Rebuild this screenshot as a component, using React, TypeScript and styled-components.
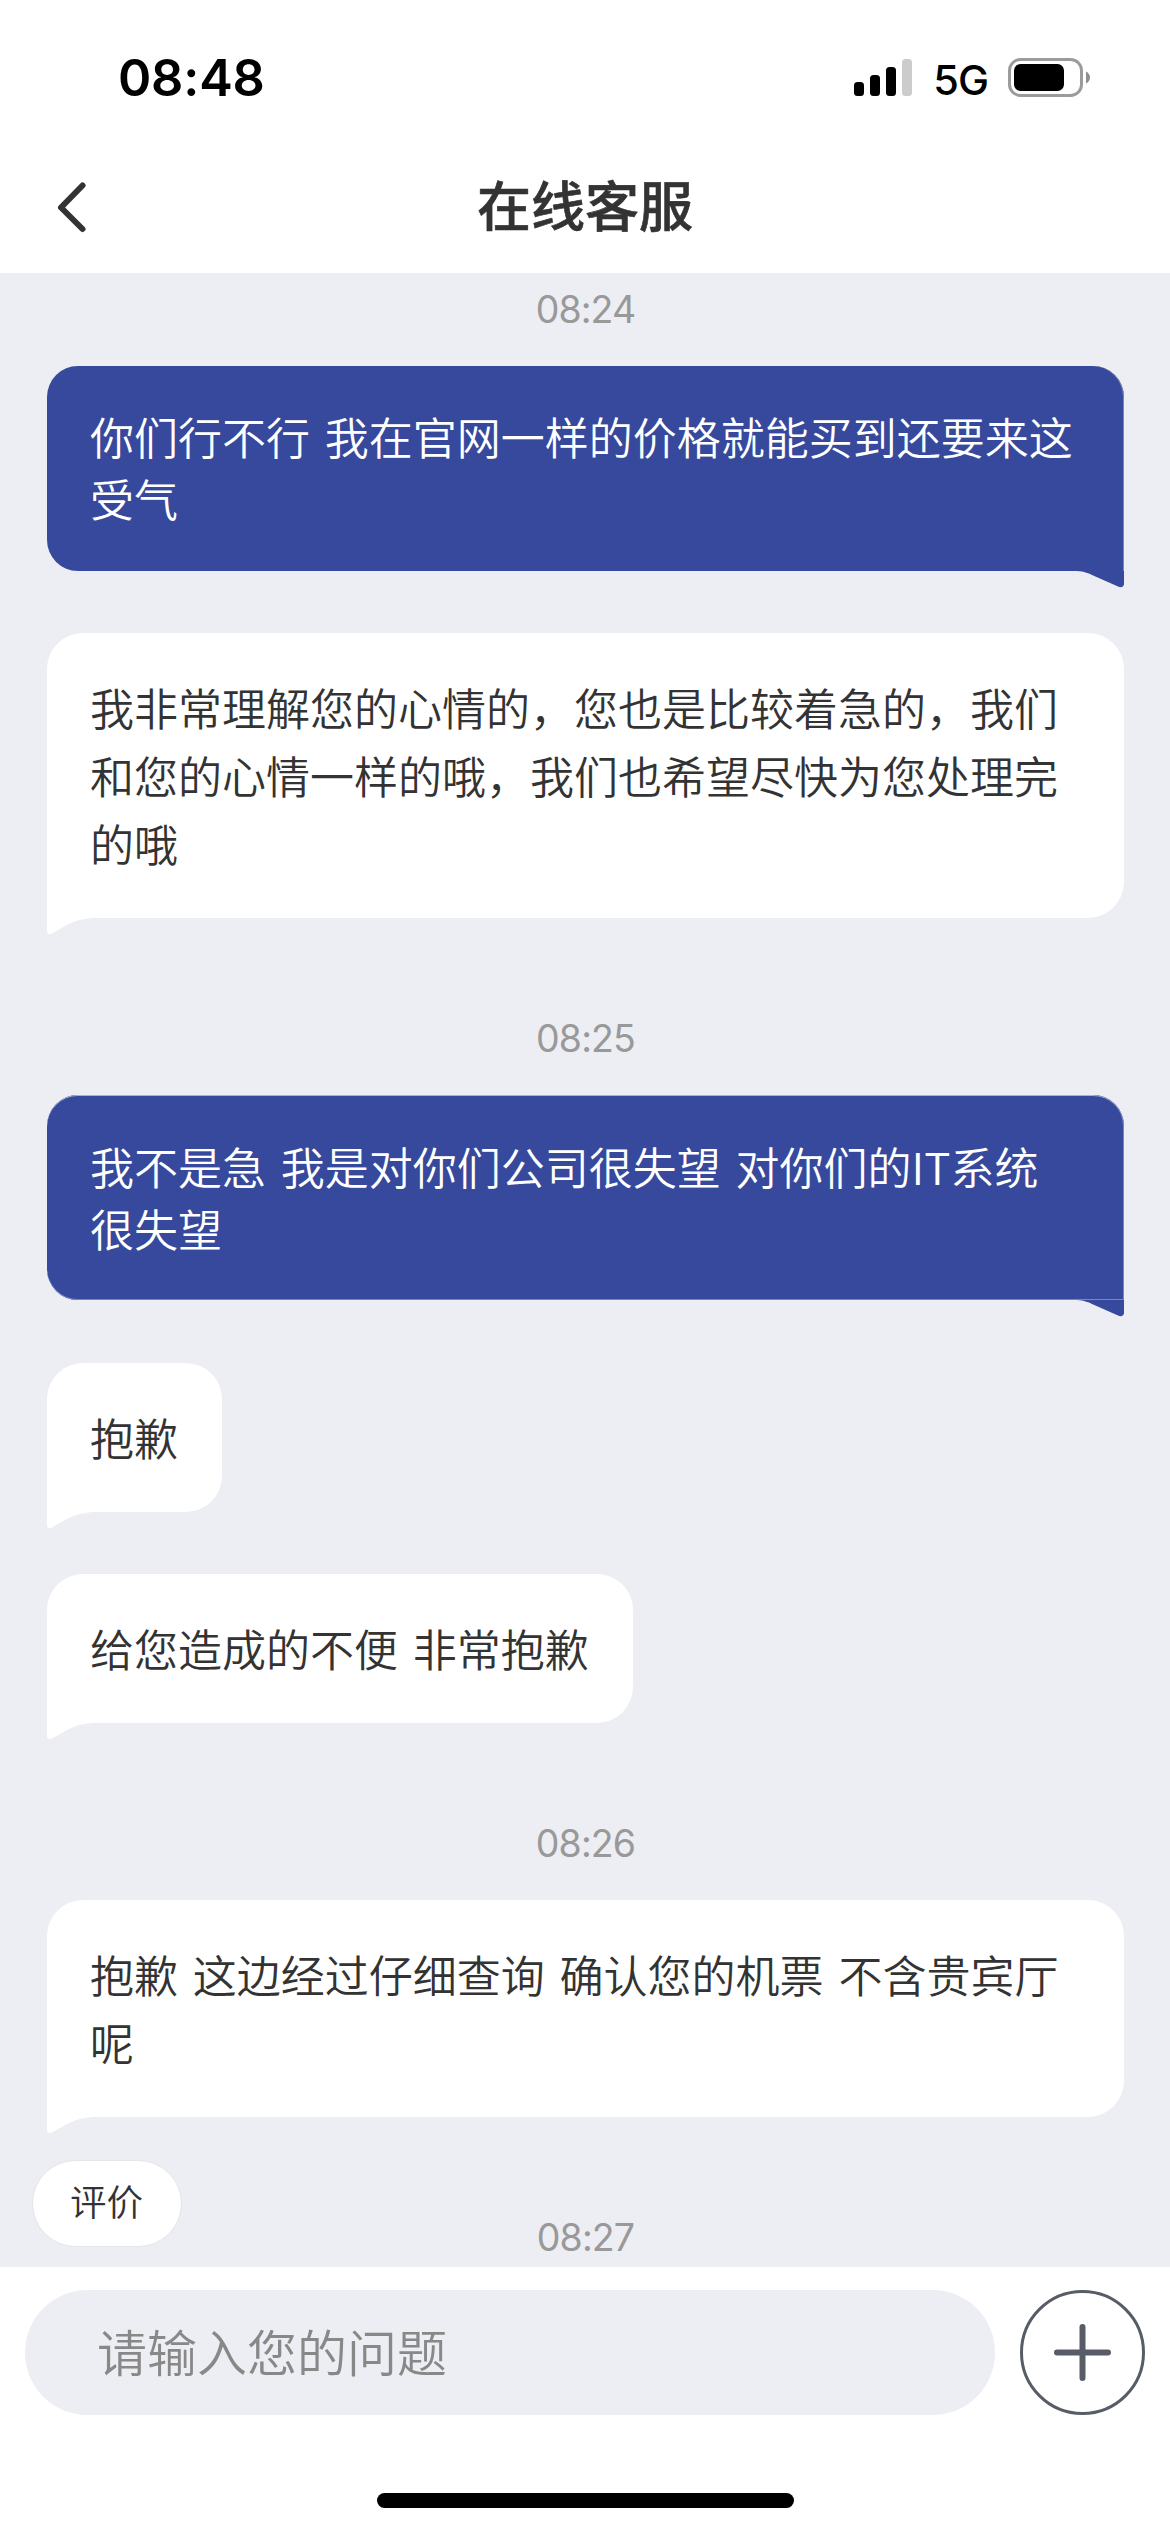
import React from 'react';
import styled, { createGlobalStyle, css } from 'styled-components';

const GlobalStyle = createGlobalStyle`
  * { box-sizing: border-box; }
  body { margin: 0; background: #fff; }
  button { font: inherit; color: inherit; cursor: pointer; }
`;

const surface = '#edeef3';
const blue = '#37499c';
const latin = `Inter, "Liberation Sans", sans-serif`;
const cjk = `"Noto Sans CJK SC", "Liberation Sans", sans-serif`;

const Screen = styled.div`
  width: 1170px;
  height: 2532px;
  display: flex;
  flex-direction: column;
  background: #fff;
  color: #333;
  font-family: ${cjk};
  overflow: hidden;
`;

const StatusBar = styled.header`
  height: 141px;
  flex: none;
  display: flex;
  align-items: center;
  justify-content: space-between;
  padding: 14px 79px 0 118px;
  color: #000;
  font-family: ${latin};
`;

const Clock = styled.span`
  font-size: 50.5px;
  font-weight: 600;
  line-height: 60px;
  letter-spacing: -0.2px;
`;

const StatusIcons = styled.div`
  display: flex;
  align-items: center;
`;

const Network = styled.span`
  font-size: 41.5px;
  font-weight: 450;
  line-height: 50px;
  letter-spacing: -1px;
  margin: 4px 20px 0 20px;
`;

const NavBar = styled.nav`
  height: 132px;
  flex: none;
  display: grid;
  grid-template-columns: 150px 1fr 150px;
  align-items: center;
`;

const BackButton = styled.button`
  display: flex;
  padding: 0 0 0 54px;
  border: 0;
  background: none;
`;

const Title = styled.h1`
  margin: 0;
  padding-bottom: 7px;
  text-align: center;
  font-size: 54px;
  font-weight: 500;
  line-height: 80px;
  -webkit-text-stroke: 0.6px #333;
`;

const Chat = styled.main`
  position: relative;
  height: 1994px;
  flex: none;
  display: flex;
  flex-direction: column;
  align-items: flex-start;
  padding: 0 46px 0 47px;
  background: ${surface};
  overflow: hidden;
`;

const TimeLabel = styled.time<{ $gap: number }>`
  align-self: center;
  flex: none;
  height: 46px;
  margin-top: ${(p) => p.$gap}px;
  padding-top: 1px;
  color: #999;
  font-family: ${latin};
  font-size: 37.5px;
  font-weight: 380;
  line-height: 46px;
  letter-spacing: -0.9px;
`;

const Bubble = styled.div<{ $mine?: boolean; $gap: number; $seam?: boolean }>`
  position: relative;
  flex: none;
  margin-top: ${(p) => p.$gap}px;
  font-size: 44px;
  font-weight: 350;
  word-spacing: 5px;
  ${(p) =>
    p.$mine
      ? css`
          width: 100%;
          padding: ${p.$seam ? '40px 46px 41px 43px' : '39px 46px 42px 43px'};
          border-radius: 31px 31px 0 31px;
          background: ${blue};
          color: #fff;
          line-height: 62px;
          box-shadow: inset -1px 0 #7a87be${p.$seam ? ', inset 0 1px #a9b1d3, inset 0 -1px #7a87be' : ''};
        `
      : css`
          padding: 40px 44px 41px 43px;
          border-radius: 36px 36px 36px 0;
          background: #fff;
          line-height: 68px;
        `}
`;

const Tail = styled.svg<{ $mine?: boolean }>`
  position: absolute;
  top: 100%;
  ${(p) => (p.$mine ? 'right: 0;' : 'left: 0;')}
  display: block;
  width: 50px;
  height: 17px;
`;

const RateButton = styled.button`
  position: absolute;
  left: 32px;
  bottom: 20px;
  width: 150px;
  height: 87px;
  padding: 0 1px 5px 0;
  border: 1px solid #e5e5e7;
  border-radius: 44px;
  background: #fff;
  font-size: 36.5px;
  font-weight: 350;
  line-height: 50px;
  text-align: center;
`;

const Composer = styled.footer`
  flex: none;
  display: flex;
  align-items: center;
  gap: 25px;
  padding: 23px 25px 0;
`;

const Field = styled.div`
  flex: 1;
  height: 125px;
  display: flex;
  align-items: center;
  padding: 0 72px 5px;
  border-radius: 63px;
  background: ${surface};
  color: #888;
  font-size: 50px;
  font-weight: 350;
  line-height: 74px;
`;

const AddButton = styled.button`
  width: 125px;
  height: 125px;
  padding: 0;
  border: 0;
  background: none;
`;

const HomeIndicator = styled.div`
  width: 417px;
  height: 15px;
  margin: 78px auto 0;
  border-radius: 8px;
  background: #000;
`;

function SignalIcon() {
  return (
    <svg width="60" height="40" viewBox="0 0 60 40">
      <rect x="1" y="24" width="10" height="14" rx="3.5" />
      <rect x="17" y="17" width="10" height="21" rx="3.5" />
      <rect x="33" y="9" width="10" height="29" rx="3.5" />
      <rect x="49" y="1" width="10" height="37" rx="3.5" fill="#ccc" />
    </svg>
  );
}

function BatteryIcon() {
  return (
    <svg width="83" height="40" viewBox="0 0 83 40">
      <rect x="1.5" y="1.5" width="72" height="36" rx="11" fill="none" stroke="#9b9b9b" strokeWidth="3" />
      <rect x="6" y="6" width="50" height="27" rx="6.5" />
      <path d="M78 13.5c2.400 1 4 3.400 4 6s-1.600 5-4 6z" fill="#8e8e8e" />
    </svg>
  );
}

interface MessageProps {
  mine?: boolean;
  gap: number;
  seam?: boolean;
  children: React.ReactNode;
}

function Message({ mine, gap, seam, children }: MessageProps) {
  return (
    <Bubble $mine={mine} $gap={gap} $seam={seam}>
      {children}
      {mine ? (
        <Tail $mine viewBox="0 0 50 17" fill={blue}>
          <path d="M0 0C8 0 13 1.500 18 4L44 15.500C47 17 50 16 50 13V0Z" />
        </Tail>
      ) : (
        <Tail viewBox="0 0 50 17" fill="#fff">
          <path d="M50 0C38 0 30 2 20 7L5 15.400C2 17 0 15.500 0 13V0Z" />
        </Tail>
      )}
    </Bubble>
  );
}

export default function App() {
  return (
    <Screen lang="zh-CN">
      <GlobalStyle />
      <StatusBar>
        <Clock>08:48</Clock>
        <StatusIcons>
          <SignalIcon />
          <Network>5G</Network>
          <BatteryIcon />
        </StatusIcons>
      </StatusBar>
      <NavBar>
        <BackButton aria-label="返回">
          <svg width="36" height="56" viewBox="0 0 36 56" fill="none" stroke="#333" strokeWidth="6" strokeLinecap="round" strokeLinejoin="round">
            <path d="M28.500 6.500L7 28.500L28.500 50" />
          </svg>
        </BackButton>
        <Title>在线客服</Title>
      </NavBar>
      <Chat>
        <TimeLabel $gap={13}>08:24</TimeLabel>
        <Message mine gap={34}>你们行不行 我在官网一样的价格就能买到还要来这受气</Message>
        <Message gap={62}>
          我非常理解您的心情的，您也是比较着急的，我们和您的心情一样的哦，我们也希望尽快为您处理完的哦
        </Message>
        <TimeLabel $gap={97}>08:25</TimeLabel>
        <Message mine seam gap={34}>我不是急 我是对你们公司很失望 对你们的IT系统很失望</Message>
        <Message gap={63}>抱歉</Message>
        <Message gap={62}>给您造成的不便 非常抱歉</Message>
        <TimeLabel $gap={97}>08:26</TimeLabel>
        <Message gap={34}>抱歉 这边经过仔细查询 确认您的机票 不含贵宾厅呢</Message>
        <TimeLabel $gap={97}>08:27</TimeLabel>
        <RateButton>评价</RateButton>
      </Chat>
      <Composer>
        <Field>请输入您的问题</Field>
        <AddButton aria-label="更多">
          <svg width="125" height="125" viewBox="0 0 125 125" fill="none" stroke="#575c66">
            <circle cx="62.5" cy="62.5" r="61" strokeWidth="3" />
            <path d="M62.500 37V88M37 62.500H88" strokeWidth="6" strokeLinecap="round" />
          </svg>
        </AddButton>
      </Composer>
      <HomeIndicator />
    </Screen>
  );
}
